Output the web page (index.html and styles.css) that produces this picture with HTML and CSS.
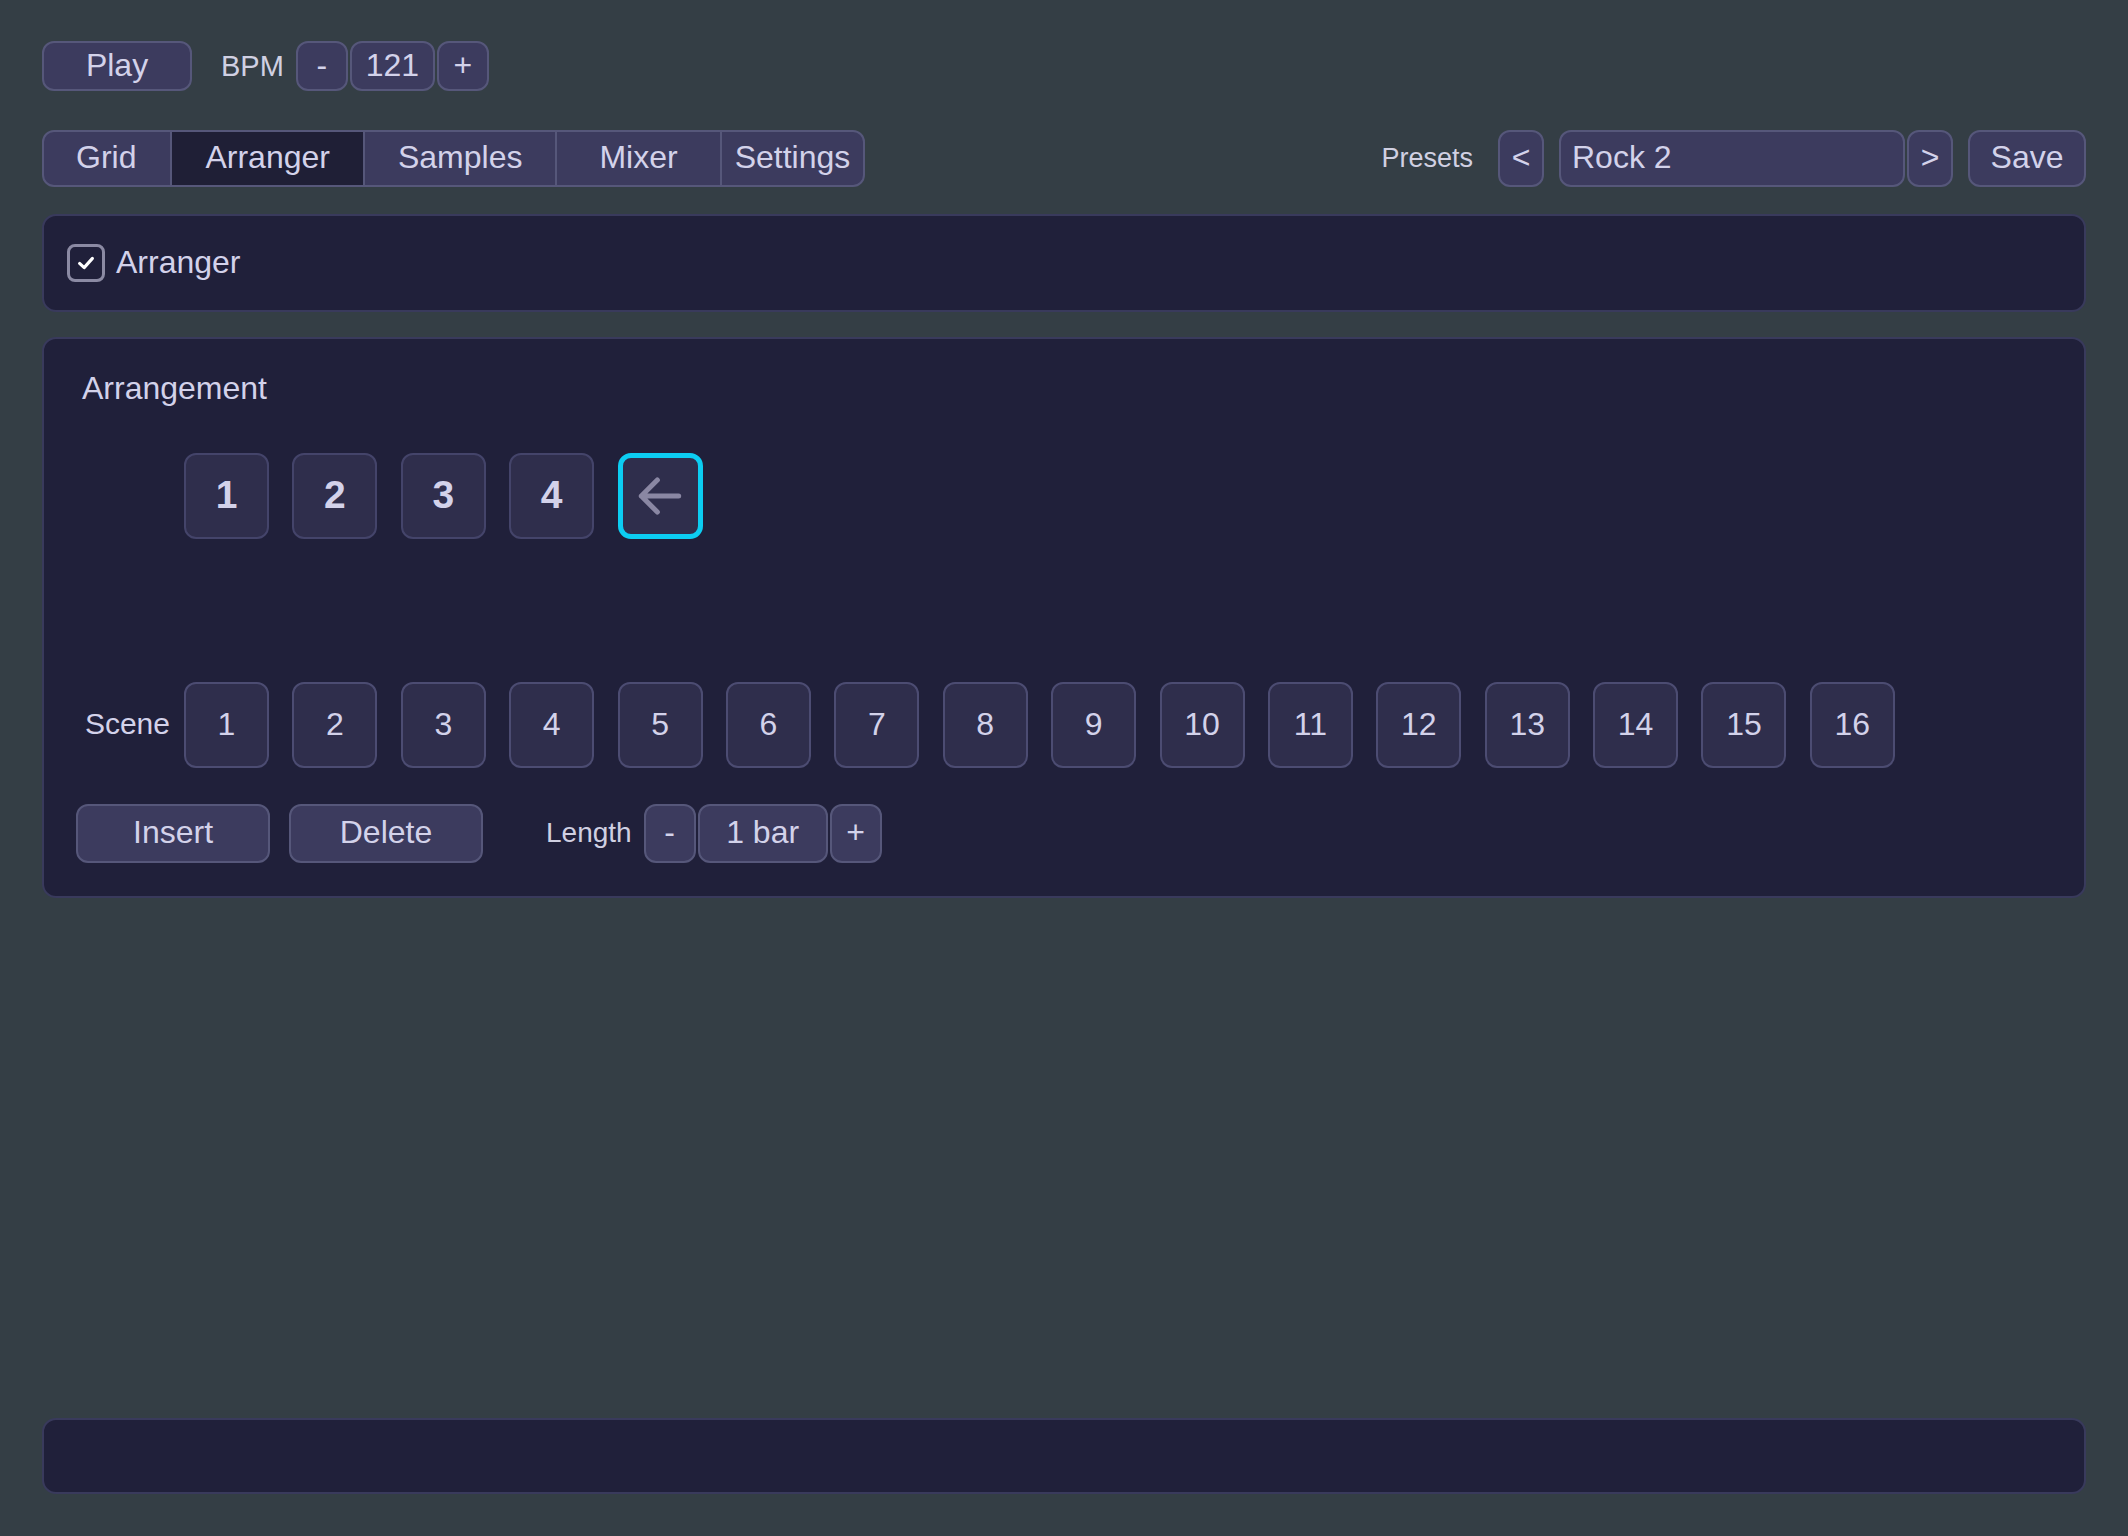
FILE: index.html
```html
<!DOCTYPE html>
<html lang="en">
<head>
    <meta charset="UTF-8">
    <title>Arranger</title>
    <link rel="stylesheet" href="styles.css">
</head>
<body>
    <div class="topbar">
        <button class="btn play">Play</button>
        <span class="label bpm-label">BPM</span>
        <div class="stepper">
            <button class="btn step">-</button>
            <span class="btn value bpm-value">121</span>
            <button class="btn step">+</button>
        </div>
    </div>

    <div class="navbar">
        <div class="tabs">
            <div class="tab tab-grid">Grid</div>
            <div class="tab active">Arranger</div>
            <div class="tab">Samples</div>
            <div class="tab tab-mixer">Mixer</div>
            <div class="tab tab-settings">Settings</div>
        </div>
        <div class="presets">
            <span class="label presets-label">Presets</span>
            <button class="btn arrow">&lt;</button>
            <div class="btn preset-name">Rock 2</div>
            <button class="btn arrow next">&gt;</button>
            <button class="btn save">Save</button>
        </div>
    </div>

    <div class="panel toggle-panel">
        <span class="checkbox">
            <svg viewBox="0 0 24 24" width="22" height="22"><polyline points="5,12.5 10,17 19,7" fill="none" stroke="#fff" stroke-width="3.4" stroke-linecap="round" stroke-linejoin="round"/></svg>
        </span>
        <span class="toggle-label">Arranger</span>
    </div>

    <div class="panel arrangement">
        <h3>Arrangement</h3>
        <div class="row pattern-row">
            <span class="row-label"></span>
            <div class="cells">
                <div class="cell pattern">1</div>
                <div class="cell pattern">2</div>
                <div class="cell pattern">3</div>
                <div class="cell pattern">4</div>
                <div class="cell pattern back">
                    <svg viewBox="0 0 24 24" width="64" height="64"><path d="M19 12H5M11 18 5 12l6-6" fill="none" stroke="#8a87a3" stroke-width="1.9" stroke-linecap="round" stroke-linejoin="round"/></svg>
                </div>
            </div>
        </div>
        <div class="row scene-row">
            <span class="row-label">Scene</span>
            <div class="cells">
                <div class="cell">1</div>
                <div class="cell">2</div>
                <div class="cell">3</div>
                <div class="cell">4</div>
                <div class="cell">5</div>
                <div class="cell">6</div>
                <div class="cell">7</div>
                <div class="cell">8</div>
                <div class="cell">9</div>
                <div class="cell">10</div>
                <div class="cell">11</div>
                <div class="cell">12</div>
                <div class="cell">13</div>
                <div class="cell">14</div>
                <div class="cell">15</div>
                <div class="cell">16</div>
            </div>
        </div>
        <div class="actions">
            <button class="btn action">Insert</button>
            <button class="btn action">Delete</button>
            <span class="label length-label">Length</span>
            <div class="stepper tall">
                <button class="btn step">-</button>
                <span class="btn value length-value">1 bar</span>
                <button class="btn step">+</button>
            </div>
        </div>
    </div>

    <div class="panel status"></div>
</body>
</html>
```

FILE: styles.css
```css
* {
    box-sizing: border-box;
}
html, body {
    height: 100%;
}
body {
    margin: 0;
    padding: 41px 42px 42px;
    display: flex;
    flex-direction: column;
    background: #343e45;
    color: #d3d2ea;
    font-family: "Liberation Sans", Arial, sans-serif;
    font-size: 32px;
}
.btn {
    display: flex;
    align-items: center;
    justify-content: center;
    margin: 0;
    padding: 0 0 2px;
    background: #3c3b5e;
    border: 2px solid #56577a;
    border-radius: 12px;
    color: #d3d2ea;
    font-family: inherit;
    font-size: 32px;
}
.label {
    font-size: 28px;
    color: #d0d0e2;
}

/* top bar */
.topbar {
    display: flex;
    align-items: center;
    height: 50px;
}
.play {
    width: 150px;
    height: 50px;
}
.bpm-label {
    font-size: 29px;
    margin: 0 12px 0 29px;
}
.stepper {
    display: flex;
    gap: 2px;
}
.stepper .btn {
    height: 50px;
}
.step {
    width: 52px;
}
.bpm-value {
    width: 85px;
}

/* tabs + presets */
.navbar {
    display: flex;
    align-items: center;
    margin-top: 39px;
    height: 57px;
}
.tabs {
    display: flex;
    height: 57px;
    border: 2px solid #56577a;
    border-radius: 12px;
    overflow: hidden;
    background: #3c3b5e;
}
.tab {
    display: flex;
    align-items: center;
    padding: 0 33px 2px;
    border-left: 2px solid #56577a;
}
.tab:first-child {
    border-left: none;
}
.tab-grid {
    padding: 0 34px 2px 32px;
}
.tab-mixer {
    padding: 0 42px 2px;
}
.tab-settings {
    padding: 0 13px 2px;
}
.tab.active {
    background: #1f1f36;
}
.presets {
    display: flex;
    align-items: center;
    margin-left: auto;
    height: 57px;
}
.presets .btn {
    height: 57px;
}
.presets-label {
    font-size: 27px;
    margin-right: 25px;
}
.arrow {
    width: 46px;
}
.preset-name {
    width: 346px;
    justify-content: flex-start;
    padding-left: 11px;
    margin-left: 15px;
}
.arrow.next {
    margin-left: 2px;
}
.save {
    width: 118px;
    margin-left: 15px;
}

/* panels */
.panel {
    background: #20203a;
    border: 2px solid #393a5c;
    border-radius: 14px;
}
.toggle-panel {
    display: flex;
    align-items: center;
    margin-top: 27px;
    height: 98px;
    padding-left: 23px;
}
.checkbox {
    display: flex;
    align-items: center;
    justify-content: center;
    width: 38px;
    height: 38px;
    border: 3px solid #8b8aa3;
    border-radius: 8px;
}
.toggle-label {
    margin-left: 11px;
    padding-bottom: 2px;
}

.arrangement {
    margin-top: 25px;
    padding: 30px 32px 33px;
}
.arrangement h3 {
    margin: 0 0 0 6px;
    font-size: 32px;
    font-weight: normal;
    line-height: 38px;
}
.row {
    display: flex;
    align-items: center;
    gap: 14px;
}
.row-label {
    width: 94px;
    text-align: right;
    font-size: 30px;
    padding-bottom: 2px;
}
.cells {
    display: flex;
    gap: 23.4px;
}
.cell {
    display: flex;
    align-items: center;
    justify-content: center;
    width: 85px;
    height: 86px;
    padding-bottom: 2px;
    background: #2f2e4c;
    border: 2px solid #4c4c72;
    border-radius: 12px;
}
.pattern-row {
    margin-top: 46px;
}
.pattern {
    border-color: #44446a;
    font-size: 39px;
    font-weight: bold;
}
.pattern.back {
    padding-bottom: 0;
    border: 5px solid #0ccdf2;
    border-radius: 13px;
}
.scene-row {
    margin-top: 143px;
}
.actions {
    display: flex;
    align-items: center;
    margin-top: 36px;
}
.action {
    width: 194px;
    height: 59px;
    margin-right: 19px;
}
.length-label {
    margin: 0 12px 0 44px;
    padding-bottom: 2px;
}
.stepper.tall .btn {
    height: 59px;
}
.length-value {
    width: 130px;
}

.status {
    margin-top: auto;
    height: 76px;
}
```
